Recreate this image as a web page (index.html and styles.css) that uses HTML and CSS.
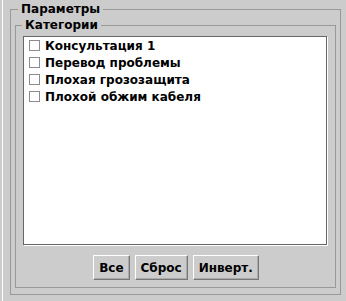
FILE: index.html
```html
<!DOCTYPE html>
<html lang="ru">
<head>
    <meta charset="UTF-8">
    <title>Параметры</title>
    <link rel="stylesheet" href="styles.css">
</head>
<body>
    <div class="window">
        <fieldset class="group outer">
            <legend>Параметры</legend>
            <fieldset class="group inner">
                <legend>Категории</legend>
                <div class="listbox">
                    <div class="item"><span class="check"></span>Консультация 1</div>
                    <div class="item"><span class="check"></span>Перевод проблемы</div>
                    <div class="item"><span class="check"></span>Плохая грозозащита</div>
                    <div class="item"><span class="check"></span>Плохой обжим кабеля</div>
                </div>
                <div class="buttons">
                    <button>Все</button>
                    <button>Сброс</button>
                    <button>Инверт.</button>
                </div>
            </fieldset>
        </fieldset>
    </div>
</body>
</html>
```

FILE: styles.css
```css
* {
    box-sizing: border-box;
}

html, body {
    margin: 0;
    padding: 0;
    background-color: #cccccc;
}

body {
    font-family: 'DejaVu Sans', sans-serif;
    font-size: 12px;
    font-weight: bold;
    color: #000;
}

.window {
    width: 344px;
    height: 301px;
    margin-left: 2px;
    border-left: 1px solid #fff;
    padding: 1px 5px 0 7px;
}

.group {
    margin: 0;
    border: 1px solid #999;
    min-width: 0;
}

.group legend {
    padding: 0 3px;
    line-height: 16px;
}

.outer {
    height: 294px;
    padding: 0 4px 4px 4px;
}

.outer > legend {
    margin-left: 3px;
}

.inner {
    padding: 3px 6px 7px 7px;
}

.inner > legend {
    margin-left: -1px;
}

.listbox {
    background-color: #fff;
    height: 209px;
    width: 304px;
    border: 1px solid #666;
    box-shadow: 1px 1px 0 #fff;
}

.item {
    display: flex;
    align-items: center;
    height: 17px;
    padding-left: 5px;
    white-space: nowrap;
}

.check {
    width: 11px;
    height: 11px;
    border: 1px solid #8c8c8c;
    background-color: #fff;
    margin-right: 5px;
    flex-shrink: 0;
}

.buttons {
    display: flex;
    justify-content: center;
    gap: 5px;
    margin-top: 10px;
}

button {
    font-family: 'DejaVu Sans', sans-serif;
    font-size: 12px;
    font-weight: bold;
    color: #000;
    background-color: #cccccc;
    height: 25px;
    padding: 0 5px;
    margin: 0;
    border: 1px solid;
    border-color: #fff #777 #777 #fff;
    box-shadow: inset -1px -1px 0 #aaa;
    border-radius: 0;
}
```
